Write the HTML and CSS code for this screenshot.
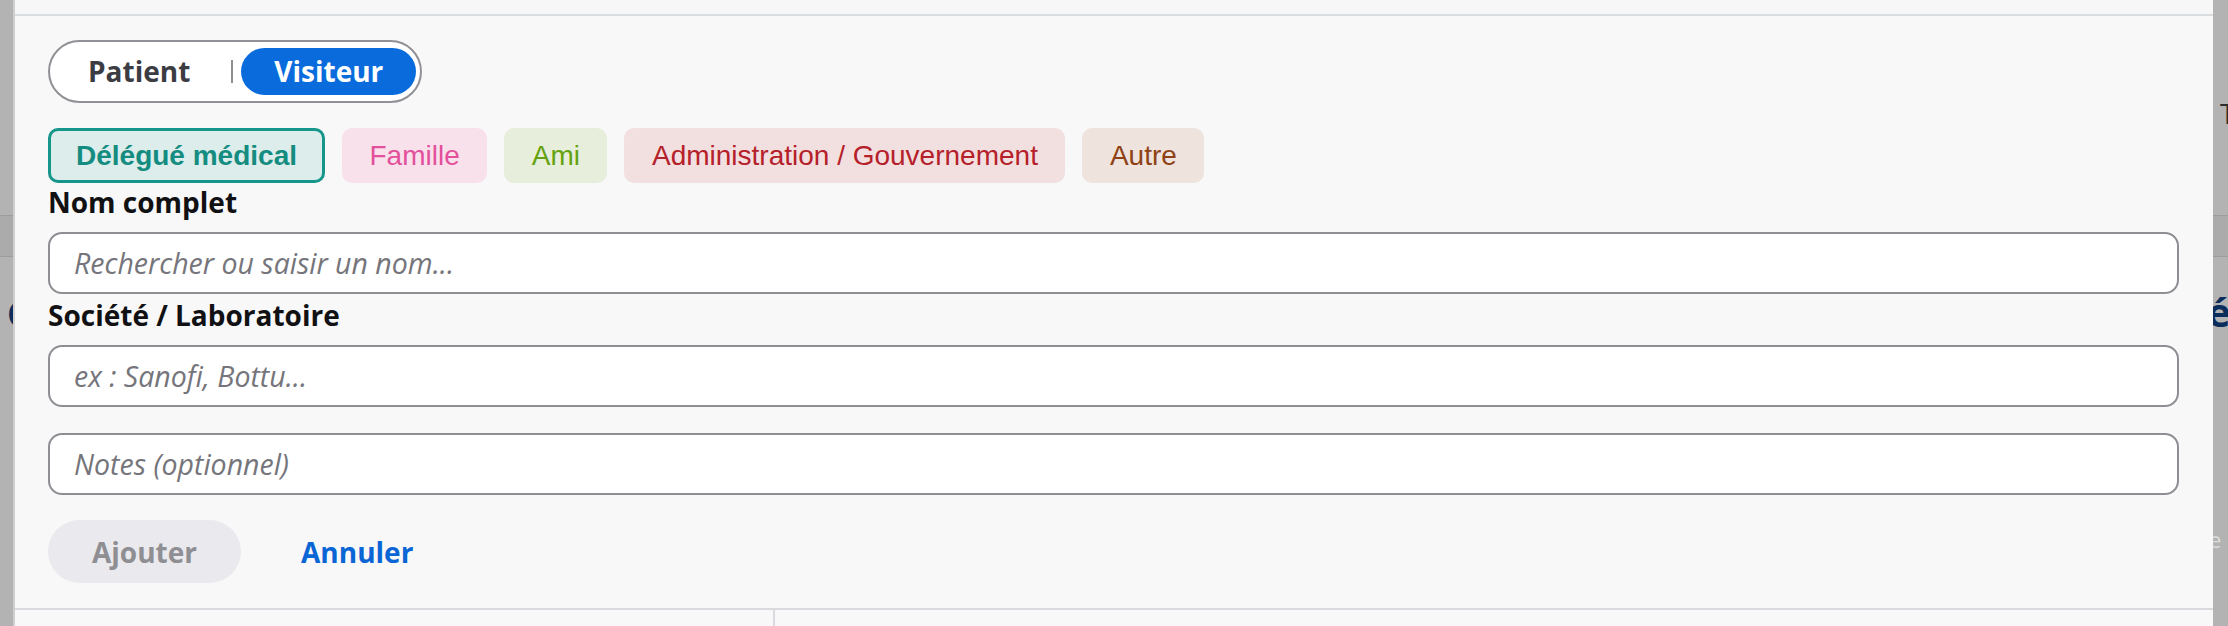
FILE: index.html
```html
<!DOCTYPE html>
<html lang="fr">
<head>
    <meta charset="UTF-8">
    <meta name="viewport" content="width=device-width, initial-scale=1.0">
    <title>Ajouter un visiteur</title>
    <link rel="stylesheet" href="styles.css">
</head>
<body>
    <div class="screen">
        <!-- page behind the sheet, dimmed -->
        <aside class="backdrop backdrop-left">
            <div class="backdrop-band"></div>
            <span class="backdrop-heading">C</span>
        </aside>

        <div class="sheet">
            <div class="sheet-head"></div>

            <form class="visitor-form" onsubmit="return false">
                <div class="segmented">
                    <button type="button" class="segment">Patient</button>
                    <span class="segment-sep"></span>
                    <button type="button" class="segment active">Visiteur</button>
                </div>

                <div class="chips">
                    <button type="button" class="chip chip-teal selected">Délégué médical</button>
                    <button type="button" class="chip chip-pink">Famille</button>
                    <button type="button" class="chip chip-lime">Ami</button>
                    <button type="button" class="chip chip-red">Administration / Gouvernement</button>
                    <button type="button" class="chip chip-brown">Autre</button>
                </div>

                <label class="field">
                    <span class="field-label">Nom complet</span>
                    <input type="text" class="field-input" placeholder="Rechercher ou saisir un nom...">
                </label>

                <label class="field">
                    <span class="field-label">Société / Laboratoire</span>
                    <input type="text" class="field-input" placeholder="ex : Sanofi, Bottu...">
                </label>

                <input type="text" class="field-input notes" placeholder="Notes (optionnel)">

                <div class="actions">
                    <button type="submit" class="btn-add" disabled>Ajouter</button>
                    <button type="button" class="btn-cancel">Annuler</button>
                </div>
            </form>

            <div class="sheet-foot">
                <div class="foot-cell foot-left"></div>
                <div class="foot-cell"></div>
            </div>
        </div>

        <aside class="backdrop backdrop-right">
            <span class="backdrop-text">Tous</span>
            <div class="backdrop-band"></div>
            <span class="backdrop-heading">é</span>
            <span class="backdrop-faint">e</span>
        </aside>
    </div>
</body>
</html>
```

FILE: styles.css
```css
* {
    margin: 0;
    padding: 0;
    box-sizing: border-box;
}

body {
    font-family: 'Open Sans', 'Noto Sans', sans-serif;
    background: #b3b3b3;
    height: 626px;
    overflow: hidden;
}

.screen {
    display: flex;
    height: 100%;
}

/* dimmed page around the sheet */
.backdrop {
    width: 15px;
    flex-shrink: 0;
    background: #b3b3b3;
    display: flex;
    flex-direction: column;
    overflow: hidden;
    white-space: nowrap;
}

.backdrop-left {
    padding-top: 215px;
    border-right: 2px solid #cfcfcf;
}

.backdrop-band {
    flex-shrink: 0;
    height: 42px;
    background: #ababab;
    border-top: 1px solid #9d9d9d;
    border-bottom: 1px solid #9d9d9d;
}

.backdrop-left .backdrop-heading {
    margin-top: 39px;
    padding-left: 7px;
    font-size: 36px;
    line-height: 36px;
    font-weight: 700;
    color: #0b2d5c;
}

.backdrop-right {
    padding-top: 99px;
}

.backdrop-text {
    padding-left: 7px;
    font-size: 28px;
    line-height: 28px;
    color: #2c2c2c;
}

.backdrop-right .backdrop-band {
    margin-top: 88px;
}

.backdrop-right .backdrop-heading {
    margin-top: 33px;
    margin-left: -6px;
    font-size: 40px;
    line-height: 44px;
    font-weight: 700;
    color: #0b2d5c;
}

.backdrop-faint {
    margin-top: 194px;
    margin-left: -4px;
    font-size: 22px;
    line-height: 22px;
    color: #dcdcdc;
}

/* sheet */
.sheet {
    flex: 1;
    background: #f8f8f8;
    display: flex;
    flex-direction: column;
}

.sheet-head {
    height: 16px;
    border-bottom: 2px solid #dadddf;
    background: #f7f7f7;
}

.visitor-form {
    padding: 24px 34px 25px 33px;
    display: flex;
    flex-direction: column;
}

/* Patient / Visiteur switch */
.segmented {
    align-self: flex-start;
    display: flex;
    align-items: center;
    padding: 6px 4px 6px 5px;
    border: 2px solid #909096;
    border-radius: 32px;
    background: white;
    margin-bottom: 25px;
}

.segment {
    font-family: 'Open Sans', sans-serif;
    font-size: 28px;
    font-weight: 700;
    line-height: 47px;
    height: 47px;
    padding: 0 33px;
    border: none;
    border-radius: 24px;
    background: transparent;
    color: #3c3c43;
    cursor: pointer;
}

.segment.active {
    background: #0a6cdc;
    color: white;
}

.segment-sep {
    width: 2px;
    height: 23px;
    background: #8e8e93;
    margin: 0 8px;
}

/* category chips */
.chips {
    display: flex;
    gap: 17px;
}

.chip {
    font-family: 'Liberation Sans', Arial, sans-serif;
    font-size: 28px;
    line-height: 29px;
    padding: 10px 24.5px;
    border: 3px solid transparent;
    border-radius: 10px;
    cursor: pointer;
}

.chip.selected {
    font-weight: 700;
    padding: 10px 25px;
}

.chip-teal {
    background: #dcedec;
    color: #148c80;
}

.chip-teal.selected {
    border-color: #16968a;
}

.chip-pink {
    background: #f9e1ec;
    color: #e3509b;
}

.chip-lime {
    background: #e7eedc;
    color: #64a30f;
}

.chip-red {
    background: #f2dfdf;
    color: #b5202a;
}

.chip-brown {
    background: #efe3de;
    color: #8e4214;
}

/* text fields */
.field {
    display: flex;
    flex-direction: column;
    gap: 11px;
}

.field + .field {
    margin-top: 2px;
}

.field-label {
    font-size: 28px;
    font-weight: 700;
    color: #111114;
}

.field-input {
    height: 62px;
    padding: 0 24px;
    border: 2px solid #8e8e93;
    border-radius: 14px;
    background: white;
    font-family: 'Open Sans', sans-serif;
    font-size: 28.5px;
    color: #111;
    outline: none;
}

.field-input::placeholder {
    font-style: italic;
    color: #75757b;
}

.field-input.notes {
    margin-top: 26px;
}

/* buttons */
.actions {
    display: flex;
    align-items: center;
    gap: 16px;
    margin-top: 25px;
}

.btn-add,
.btn-cancel {
    font-family: 'Open Sans', sans-serif;
    font-size: 28px;
    font-weight: 700;
    height: 63px;
    padding: 0 44px;
    border: none;
    border-radius: 32px;
    background: transparent;
    cursor: pointer;
}

.btn-add {
    background: #e9e9ee;
    color: #8e8e93;
}

.btn-add:disabled {
    cursor: not-allowed;
}

.btn-cancel {
    color: #0a66d4;
}

.sheet-foot {
    flex: 1;
    display: flex;
    border-top: 2px solid #d9d9de;
}

.foot-left {
    width: 760px;
    border-right: 2px solid #d9d9de;
}
```
